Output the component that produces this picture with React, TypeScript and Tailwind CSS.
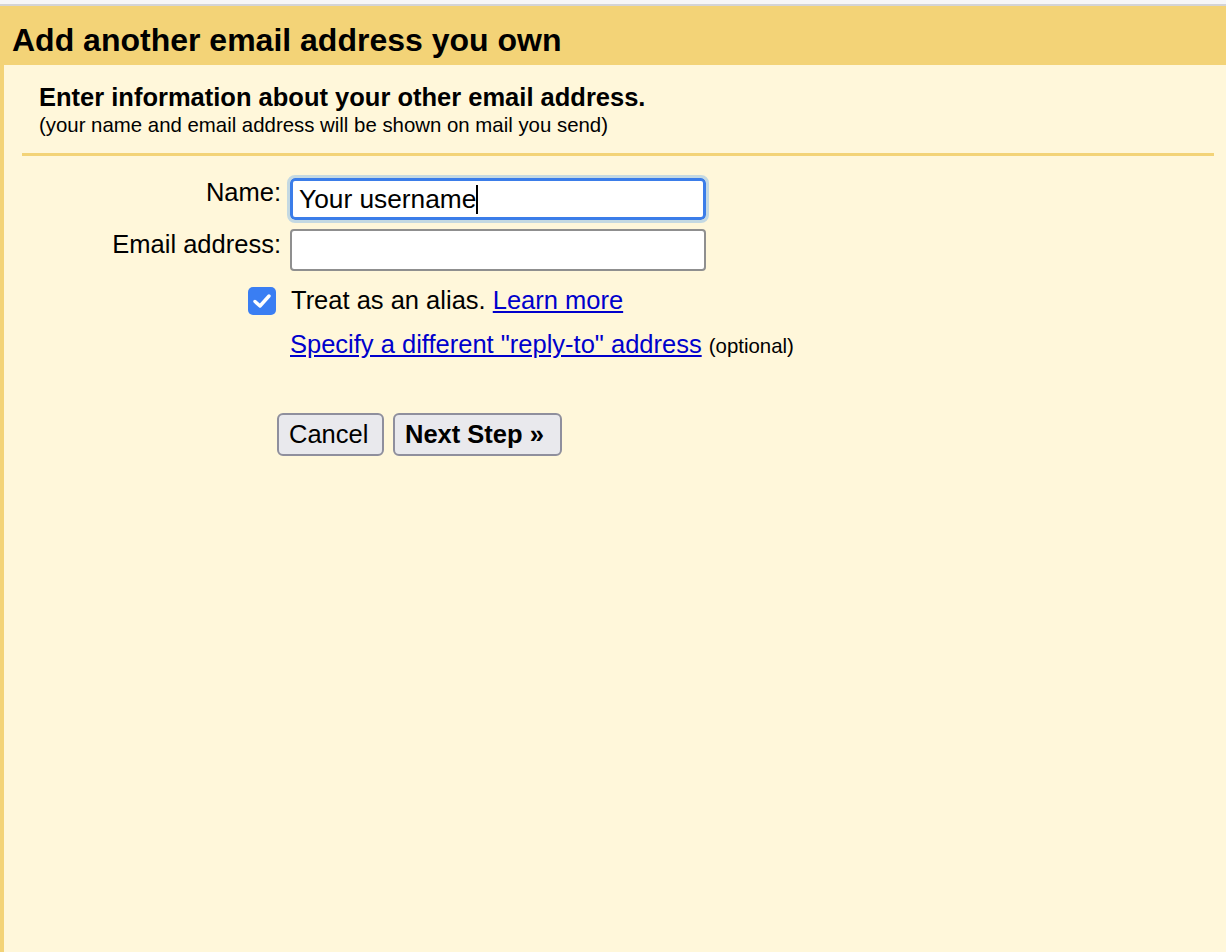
import React from "react";

export default function App() {
  const font = { fontFamily: '"Liberation Sans", Arial, sans-serif' };
  return (
    <div className="w-full h-[952px] bg-[#fff7da] overflow-hidden text-black" style={font}>
      <div className="h-[4px] bg-[#f6f6f8]" />
      <div className="h-[2px] bg-[#d4d4d6]" />
      <div className="h-[59px] bg-[#f3d377] pl-[12px] pt-[16px]">
        <h1 className="text-[32px] leading-[37px] font-bold">Add another email address you own</h1>
      </div>
      <div className="h-[887px] border-l-[4px] border-[#f3d377]">
        <div className="pl-[35px] pt-[18px]">
          <div className="text-[25.5px] leading-[29px] font-bold">
            Enter information about your other email address.
          </div>
          <div className="mt-[2px] text-[20.4px] leading-[23px]">
            (your name and email address will be shown on mail you send)
          </div>
        </div>
        <div className="ml-[18px] mr-[12px] mt-[16px] h-[3px] bg-[#f3d377]" />

        <div className="mt-[22px] flex flex-col text-[25.5px] leading-[29px]">
          <div className="flex items-start">
            <div className="w-[277px] text-right">Name:</div>
            <div className="ml-[9px] w-[416px] h-[42px] rounded-[5px] border-[3px] border-[#3b7de9] bg-white outline outline-[3px] outline-[#c4d9e2] flex items-center pl-[6px] text-[26.3px]">
              <span>Your username</span>
              <span className="inline-block w-[1.5px] h-[29px] bg-black" />
            </div>
          </div>
          <div className="mt-[9px] flex items-start">
            <div className="w-[277px] text-right pt-[1px]">Email address:</div>
            <div className="ml-[9px] w-[416px] h-[42px] rounded-[4px] border-2 border-[#8f8f8f] bg-white" />
          </div>
          <div className="mt-[15px] flex items-center">
            <div className="w-[277px] flex justify-end pr-[5px]">
              <div className="w-[28px] h-[28px] rounded-[5px] bg-[#3a7ef3] flex items-center justify-center">
                <svg width="24" height="24" viewBox="0 0 24 24" fill="none">
                  <path d="M5 12.5 L10 17 L19 7" stroke="white" strokeWidth="3.4" strokeLinecap="round" strokeLinejoin="round" />
                </svg>
              </div>
            </div>
            <div className="ml-[10px]">
              Treat as an alias.{" "}
              <a href="#" className="text-[#0000cc] underline">Learn more</a>
            </div>
          </div>
          <div className="mt-[15px] pl-[286px]">
            <a href="#" className="text-[#0000cc] underline">Specify a different "reply-to" address</a>{" "}
            <span className="text-[20.4px]">(optional)</span>
          </div>
          <div className="mt-[52px] pl-[273px] flex gap-[9px]">
            <button className="w-[107px] h-[43px] rounded-[6px] border-2 border-[#8f8f9d] bg-[#e9e9ed] text-[25.5px] leading-[29px] text-left pl-[10px]">
              Cancel
            </button>
            <button className="w-[169px] h-[43px] rounded-[6px] border-2 border-[#8f8f9d] bg-[#e9e9ed] text-[25.5px] leading-[29px] font-bold text-left pl-[10px]">
              Next Step »
            </button>
          </div>
        </div>
      </div>
    </div>
  );
}
